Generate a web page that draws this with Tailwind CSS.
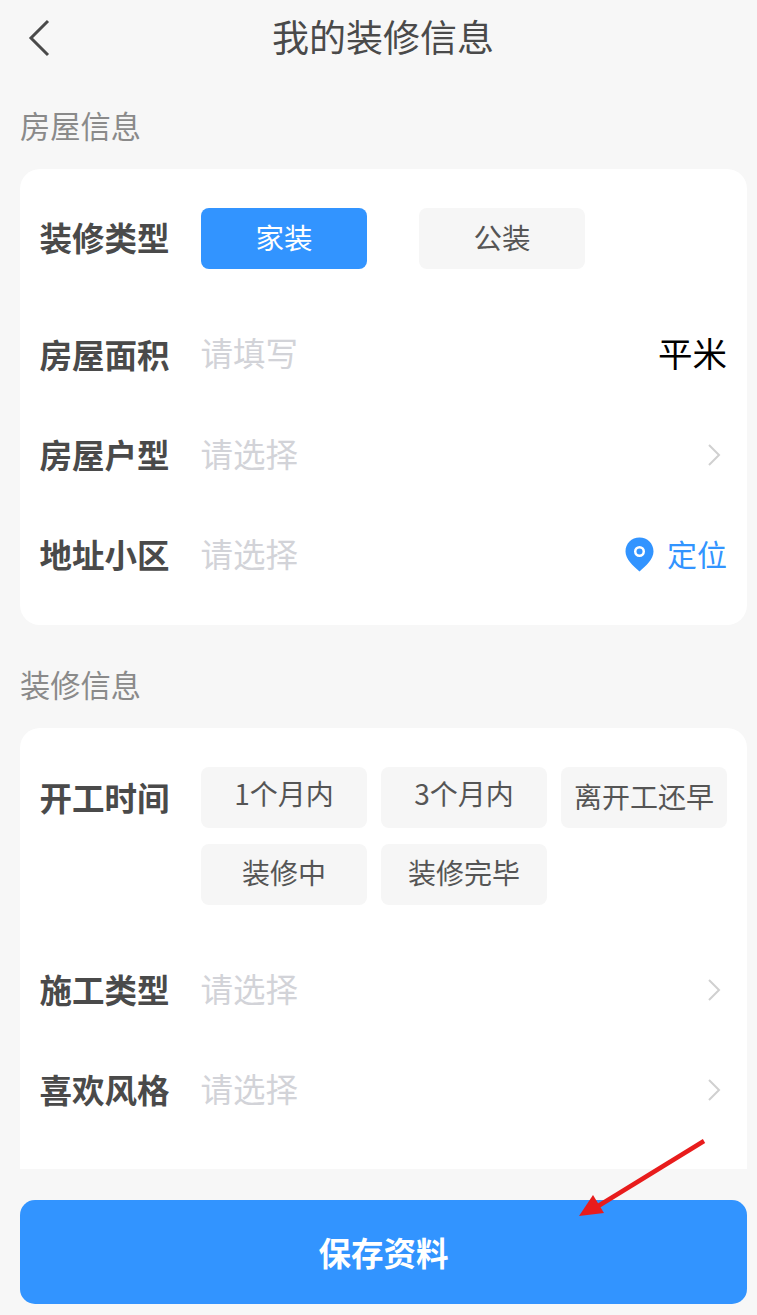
<!DOCTYPE html>
<html lang="zh">
<head>
<meta charset="utf-8">
<script src="https://cdn.jsdelivr.net/npm/@tailwindcss/browser@4"></script>
</head>
<body class="m-0">
<div class="w-[757px] h-[1315px] overflow-hidden bg-[#f7f7f7]">
<div class="relative w-[767px] h-[1315px] font-['Noto_Sans_CJK_SC','Noto_Sans',sans-serif] text-[#4a4a4a] flex flex-col">
  <header class="relative h-[75px] shrink-0 flex items-center justify-center">
    <svg class="absolute left-[28px] top-[19px]" width="24" height="38" viewBox="0 0 24 38" fill="none"><path d="M20 2 L3 19 L20 36" stroke="#4a4a4a" stroke-width="3"/></svg>
    <h1 class="text-[37px] leading-[50px] font-normal pb-[3px] pr-[1px]">我的装修信息</h1>
  </header>
  <div class="h-[94px] shrink-0 pl-[20px] pt-[29px] text-[30.250px] leading-[42px] text-[#8a8a8a]">房屋信息</div>

  <section class="mx-[20px] h-[456px] shrink-0 bg-white rounded-[20px] px-[20px] pt-[39px] flex flex-col">
    <div class="flex items-center h-[61px]">
      <span class="w-[161px] -ml-[0.500px] text-[32.500px] font-bold leading-[44px] pb-[3px]">装修类型</span>
      <div class="flex gap-[52px] ml-[0.500px]">
        <span class="w-[166px] h-[61px] rounded-[8px] bg-[#3294ff] text-white text-[28.500px] pb-[3px] flex items-center justify-center">家装</span>
        <span class="w-[166px] h-[61px] rounded-[8px] bg-[#f6f6f6] text-[#555] text-[28.500px] pb-[3px] flex items-center justify-center">公装</span>
      </div>
    </div>
    <div class="flex items-center h-[100px] mt-[36px]">
      <span class="w-[161px] -ml-[0.500px] text-[32.500px] font-bold leading-[44px] pb-[3px]">房屋面积</span>
      <span class="flex-1 text-[32.500px] pb-[6px] text-[#d2d3d8]">请填写</span>
      <span class="text-[34.500px] pb-[5px] text-black">平米</span>
    </div>
    <div class="flex items-center h-[100px]">
      <span class="w-[161px] -ml-[0.500px] text-[32.500px] font-bold leading-[44px] pb-[3px]">房屋户型</span>
      <span class="flex-1 text-[32.500px] pb-[4px] text-[#d2d3d8]">请选择</span>
      <svg class="mr-[6px]" width="14" height="24" viewBox="0 0 14 24" fill="none"><path d="M2 2 L12 12 L2 22" stroke="#d0d0d0" stroke-width="2"/></svg>
    </div>
    <div class="flex items-center h-[100px]">
      <span class="w-[161px] -ml-[0.500px] text-[32.500px] font-bold leading-[44px] pb-[2px]">地址小区</span>
      <span class="flex-1 text-[32.500px] pb-[4px] text-[#d2d3d8]">请选择</span>
      <svg class="mr-[13px] mb-[2px]" width="29" height="35" viewBox="0 0 29 35"><path fill-rule="evenodd" fill="#3294ff" d="M14.500 0.500 C22.500 0.500 28.500 6.500 28.500 14.500 C28.500 22 21 29 14.500 34.500 C8 29 0.500 22 0.500 14.500 C0.500 6.500 6.500 0.500 14.500 0.500 Z M14.500 9 A5.500 5.500 0 1 0 14.500 20 A5.500 5.500 0 1 0 14.500 9 Z"/><circle cx="14.500" cy="14.500" r="3" fill="#3294ff"/></svg>
      <span class="text-[30px] pb-[4px] text-[#3294ff]">定位</span>
    </div>
  </section>

  <div class="h-[103px] shrink-0 pl-[20px] pt-[38px] text-[30.250px] leading-[42px] text-[#8a8a8a]">装修信息</div>

  <section class="mx-[20px] h-[441px] shrink-0 bg-white rounded-t-[20px] px-[20px] pt-[39px] flex flex-col">
    <div class="flex">
      <span class="w-[161px] -ml-[0.500px] mr-[0.500px] text-[32.500px] font-bold leading-[61px] pb-[3px] -mt-[1px]">开工时间</span>
      <div class="grid grid-cols-[166px_166px_166px] gap-x-[14px] gap-y-[16px]">
        <span class="h-[61px] rounded-[8px] bg-[#f6f6f6] text-[#555] text-[28px] pb-[9px] flex items-center justify-center">1个月内</span>
        <span class="h-[61px] rounded-[8px] bg-[#f6f6f6] text-[#555] text-[28px] pb-[9px] flex items-center justify-center">3个月内</span>
        <span class="h-[61px] rounded-[8px] bg-[#f6f6f6] text-[#555] text-[28px] pb-[4px] flex items-center justify-center">离开工还早</span>
        <span class="h-[61px] rounded-[8px] bg-[#f6f6f6] text-[#555] text-[28px] pb-[5px] flex items-center justify-center">装修中</span>
        <span class="h-[61px] rounded-[8px] bg-[#f6f6f6] text-[#555] text-[28px] pb-[5px] flex items-center justify-center">装修完毕</span>
      </div>
    </div>
    <div class="flex items-center h-[100px] mt-[35px]">
      <span class="w-[161px] -ml-[0.500px] text-[32.500px] font-bold leading-[44px] pb-[2px]">施工类型</span>
      <span class="flex-1 text-[32.500px] pb-[4px] text-[#d2d3d8]">请选择</span>
      <svg class="mr-[6px]" width="14" height="24" viewBox="0 0 14 24" fill="none"><path d="M2 2 L12 12 L2 22" stroke="#d0d0d0" stroke-width="2"/></svg>
    </div>
    <div class="flex items-center h-[100px]">
      <span class="w-[161px] -ml-[0.500px] text-[32.500px] font-bold leading-[44px] pb-[2px]">喜欢风格</span>
      <span class="flex-1 text-[32.500px] pb-[4px] text-[#d2d3d8]">请选择</span>
      <svg class="mr-[6px]" width="14" height="24" viewBox="0 0 14 24" fill="none"><path d="M2 2 L12 12 L2 22" stroke="#d0d0d0" stroke-width="2"/></svg>
    </div>
  </section>

  <button class="mx-[20px] mt-[31px] h-[104px] shrink-0 rounded-[15px] bg-[#3294ff] text-white text-[32.500px] font-bold flex items-center justify-center">保存资料</button>

  <svg class="absolute left-[570px] top-[1130px]" width="145" height="95" viewBox="0 0 145 95"><path d="M134 11 L25 78" stroke="#e81c1c" stroke-width="4.500"/><path d="M9 86 L23 65 L34 83 Z" fill="#e81c1c"/></svg>
</div>
</div>
</body>
</html>
